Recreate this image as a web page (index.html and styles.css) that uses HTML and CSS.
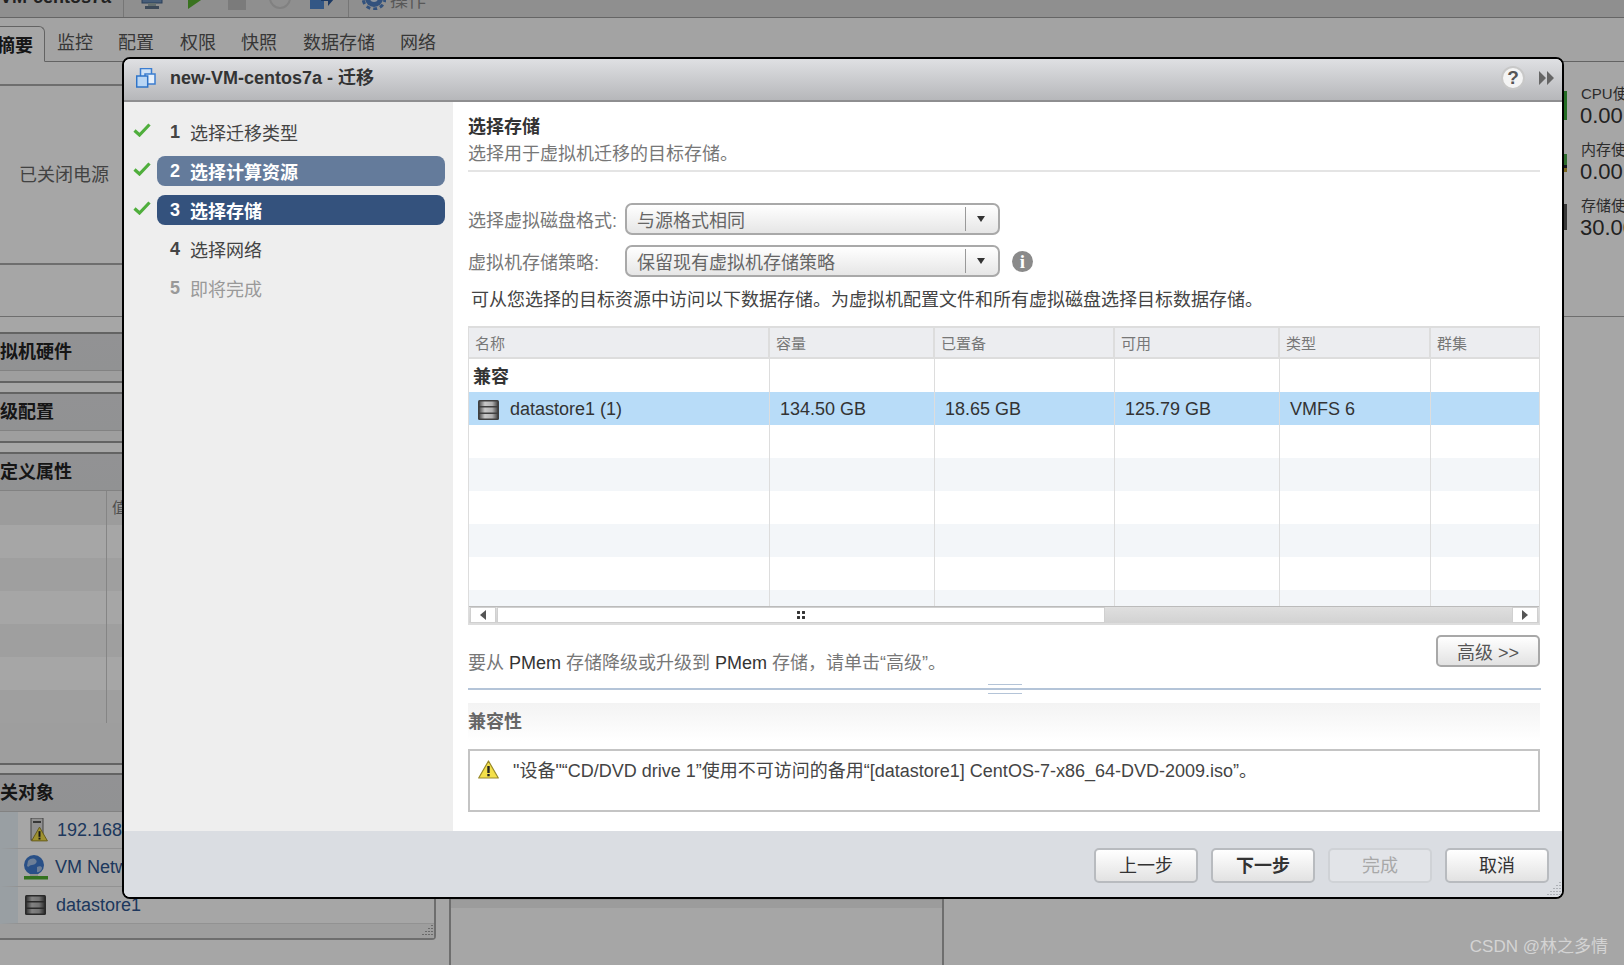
FILE: index.html
```html
<!DOCTYPE html>
<html lang="zh-CN">
<head>
<meta charset="utf-8">
<title>new-VM-centos7a - 迁移</title>
<link rel="stylesheet" href="styles.css">
</head>
<body>
<svg class="defs" width="0" height="0" aria-hidden="true">
  <defs>
    <linearGradient id="dsg" x1="0" x2="1" y1="0" y2="0"><stop offset="0" stop-color="#555"/><stop offset=".3" stop-color="#c8c8c8"/><stop offset=".7" stop-color="#b0b0b0"/><stop offset="1" stop-color="#4a4a4a"/></linearGradient>
    <symbol id="ds" viewBox="0 0 21 20"><rect width="21" height="20" rx="1.5" fill="#3f3f3f"/><rect x="1.500" y="1.500" width="18" height="4.500" fill="url(#dsg)"/><rect x="1.500" y="7.500" width="18" height="5" fill="url(#dsg)"/><rect x="1.500" y="14" width="18" height="4.500" fill="url(#dsg)"/></symbol>
    <symbol id="warn" viewBox="0 0 21 19"><path d="M10.500 1 20.300 18H.7Z" fill="#f4e04a" stroke="#9a8a2a" stroke-width="1.200" stroke-linejoin="round"/><rect x="9.300" y="6" width="2.400" height="7" fill="#222"/><rect x="9.300" y="14" width="2.400" height="2.300" fill="#222"/></symbol>
    <symbol id="check" viewBox="0 0 18 14"><path d="M1.500 7.500 6.500 12 16.500 1.500" fill="none" stroke="#4fae3c" stroke-width="3.200"/></symbol>
  </defs>
</svg>

<div class="page">
  <header class="toolbar">
    <span class="vm-name">VM-centos7a</span>
    <i class="sep"></i>
    <svg class="tool t-monitor" width="22" height="22" viewBox="0 0 22 22"><rect x="1" y="1" width="20" height="14" fill="#6d8fb8" stroke="#42618a"/><rect x="7" y="15" width="8" height="3" fill="#9aa"/><rect x="4" y="18" width="14" height="3" fill="#5c7088"/></svg>
    <svg class="tool t-play" width="18" height="24" viewBox="0 0 18 24"><path d="M1 1 17 12 1 23Z" fill="#58b030"/></svg>
    <svg class="tool t-stop" width="18" height="18" viewBox="0 0 18 18"><rect width="18" height="18" fill="#bdbdbd"/></svg>
    <svg class="tool t-ring" width="24" height="24" viewBox="0 0 24 24"><circle cx="12" cy="12" r="10" fill="none" stroke="#c6c6c6" stroke-width="2"/></svg>
    <svg class="tool t-move" width="26" height="20" viewBox="0 0 26 20"><rect x="1" y="1" width="14" height="18" fill="#4f86cc"/><path d="M12 7h7V2l6 7-6 7v-5h-7Z" fill="#2d5a9a"/></svg>
    <i class="sep sep-b"></i>
    <svg class="tool t-gear" width="24" height="24" viewBox="0 0 24 24"><circle cx="12" cy="12" r="9" fill="#4f7fc0"/><circle cx="12" cy="12" r="11" fill="none" stroke="#4f7fc0" stroke-width="3" stroke-dasharray="4 3"/><circle cx="12" cy="12" r="4" fill="#dbe6f4"/></svg>
    <span class="tool-label">操作</span>
  </header>

  <nav class="tabs">
    <span class="tab tab-on">摘要</span>
    <span class="tab t1">监控</span>
    <span class="tab t2">配置</span>
    <span class="tab t3">权限</span>
    <span class="tab t2">快照</span>
    <span class="tab t3">数据存储</span>
    <span class="tab t2">网络</span>
  </nav>

  <section class="summary">
    <div class="sum-left">
      <div class="sum-band"></div>
      <div class="sum-main"><span class="power">已关闭电源</span></div>
    </div>
    <div class="stats">
      <div class="stat"><i class="bar bar-cpu"></i><div class="st-col"><span class="st-l">CPU使用情况</span><span class="st-v">0.00</span></div></div>
      <div class="stat"><i class="bar bar-mem"></i><div class="st-col"><span class="st-l">内存使用情况</span><span class="st-v">0.00</span></div></div>
      <div class="stat"><i class="bar bar-sto"></i><div class="st-col"><span class="st-l">存储使用情况</span><span class="st-v">30.00</span></div></div>
    </div>
  </section>

  <div class="lower">
    <aside class="side">
      <div class="sec"><h3 class="sec-h">拟机硬件</h3><div class="sec-f"></div></div>
      <div class="sec"><h3 class="sec-h">级配置</h3><div class="sec-f"></div></div>
      <div class="sec sec-table">
        <h3 class="sec-h">定义属性</h3>
        <div class="attr attr-head"><span class="attr-a"></span><span class="attr-b">值</span></div>
        <div class="attr"><span class="attr-a"></span></div>
        <div class="attr alt"><span class="attr-a"></span></div>
        <div class="attr"><span class="attr-a"></span></div>
        <div class="attr alt"><span class="attr-a"></span></div>
        <div class="attr"><span class="attr-a"></span></div>
        <div class="attr alt"><span class="attr-a"></span></div>
        <div class="sec-f sec-f-tall"></div>
      </div>
      <div class="sec sec-last">
        <h3 class="sec-h">关对象</h3>
        <div class="rel"><svg class="rel-i" width="18" height="24" viewBox="0 0 18 24"><rect x="1" y="0" width="12" height="22" fill="#ddd" stroke="#666"/><rect x="3" y="3" width="8" height="2" fill="#555"/><use href="#warn" x="1" y="8" width="17" height="16"/></svg><a class="rel-t rel-t1">192.168.1.1</a></div>
        <div class="rel rel-2"><svg width="24" height="25" viewBox="0 0 24 25"><circle cx="10" cy="10" r="10" fill="#3f7bd0"/><path d="M4 6c3-3 6-3 8-1s-1 5-4 5-3 3-5 1ZM13 12c2-1 5-1 5 1s-3 5-5 4Z" fill="#a8c4e8"/><rect x="6" y="19" width="8" height="3" fill="#ddd"/><rect y="21" width="24" height="3.500" fill="#4fb030"/></svg><a class="rel-t rel-t2">VM Network</a></div>
        <div class="rel rel-3"><svg width="21" height="20"><use href="#ds"/></svg><a class="rel-t rel-t3">datastore1</a></div>
        <div class="sec-end"><svg class="grip" width="14" height="14" viewBox="0 0 14 14"><path d="M12 1v1M12 4v1M9 4v1M12 7v1M9 7v1M6 7v1M12 10v1M9 10v1M6 10v1M3 10v1" stroke="#555"/></svg></div>
      </div>
    </aside>
    <div class="mid"><div class="mid-head"></div></div>
  </div>
</div>

<div class="dim"></div>

<div class="modal">
  <header class="m-head">
    <svg class="m-icon" width="20" height="20" viewBox="0 0 20 20"><rect x="4.500" y=".5" width="11" height="11" fill="#cfe2f6" stroke="#3b7dd0" stroke-width="1.500"/><rect x="9" y="6" width="10" height="10" fill="#e6f0fb" stroke="#3b7dd0" stroke-width="1.500"/><rect x=".7" y="8" width="11" height="11" fill="#b9d6f4" stroke="#2f74c8" stroke-width="1.500"/></svg>
    <span class="m-title">new-VM-centos7a - 迁移</span>
    <span class="help">?</span>
    <svg class="ffwd" width="16" height="14" viewBox="0 0 16 14"><path d="M0 0 7 7 0 14ZM8 0 15 7 8 14Z" fill="#666"/></svg>
  </header>

  <div class="m-body">
    <ol class="steps">
      <li class="step"><svg class="chk" width="18" height="14"><use href="#check"/></svg><div class="pill"><b class="num">1</b><span>选择迁移类型</span></div></li>
      <li class="step"><svg class="chk" width="18" height="14"><use href="#check"/></svg><div class="pill pill-done"><b class="num">2</b><span>选择计算资源</span></div></li>
      <li class="step"><svg class="chk" width="18" height="14"><use href="#check"/></svg><div class="pill pill-now"><b class="num">3</b><span>选择存储</span></div></li>
      <li class="step"><span class="chk"></span><div class="pill"><b class="num">4</b><span>选择网络</span></div></li>
      <li class="step"><span class="chk"></span><div class="pill pill-off"><b class="num">5</b><span>即将完成</span></div></li>
    </ol>

    <main class="content">
      <h2 class="c-title">选择存储</h2>
      <p class="c-sub">选择用于虚拟机迁移的目标存储。</p>
      <hr class="c-rule">

      <div class="form-row">
        <label class="f-label">选择虚拟磁盘格式:</label>
        <div class="select"><span class="sel-v">与源格式相同</span><span class="sel-a"></span></div>
      </div>
      <div class="form-row form-row-2">
        <label class="f-label">虚拟机存储策略:</label>
        <div class="select"><span class="sel-v">保留现有虚拟机存储策略</span><span class="sel-a"></span></div>
        <span class="info">i</span>
      </div>

      <p class="lead">可从您选择的目标资源中访问以下数据存储。为虚拟机配置文件和所有虚拟磁盘选择目标数据存储。</p>

      <div class="grid">
        <div class="grid-view">
          <table class="tbl">
            <colgroup><col class="c1"><col class="c2"><col class="c3"><col class="c4"><col class="c5"><col></colgroup>
            <thead><tr><th>名称</th><th>容量</th><th>已置备</th><th>可用</th><th>类型</th><th>群集</th></tr></thead>
            <tbody>
              <tr class="grp"><td>兼容</td><td></td><td></td><td></td><td></td><td></td></tr>
              <tr class="sel"><td class="ds-cell"><span class="ds-name"><svg width="21" height="20"><use href="#ds"/></svg>datastore1 (1)</span></td><td>134.50 GB</td><td>18.65 GB</td><td>125.79 GB</td><td>VMFS 6</td><td></td></tr>
              <tr><td></td><td></td><td></td><td></td><td></td><td></td></tr>
              <tr class="alt"><td></td><td></td><td></td><td></td><td></td><td></td></tr>
              <tr><td></td><td></td><td></td><td></td><td></td><td></td></tr>
              <tr class="alt"><td></td><td></td><td></td><td></td><td></td><td></td></tr>
              <tr><td></td><td></td><td></td><td></td><td></td><td></td></tr>
              <tr class="alt"><td></td><td></td><td></td><td></td><td></td><td></td></tr>
            </tbody>
          </table>
        </div>
        <div class="hbar">
          <span class="hb-btn"><i class="arr-l"></i></span>
          <div class="hb-track"><div class="hb-thumb"><span class="hb-dots"></span></div></div>
          <span class="hb-btn"><i class="arr-r"></i></span>
        </div>
      </div>

      <div class="note-row">
        <p class="note">要从 <span class="latin">PMem</span> 存储降级或升级到 <span class="latin">PMem</span> 存储，请单击“高级”。</p>
        <button class="btn btn-adv">高级 &gt;&gt;</button>
      </div>

      <div class="splitter"><span class="split-h"></span></div>

      <h4 class="compat">兼容性</h4>
      <div class="msg"><svg width="21" height="19"><use href="#warn"/></svg><span class="msg-t">"设备"“CD/DVD drive 1”使用不可访问的备用“[datastore1] CentOS-7-x86_64-DVD-2009.iso”。</span></div>
    </main>
  </div>

  <footer class="m-foot">
    <button class="btn fbtn">上一步</button>
    <button class="btn fbtn fbtn-main">下一步</button>
    <button class="btn fbtn fbtn-off">完成</button>
    <button class="btn fbtn fbtn-cancel">取消</button>
    <svg class="grip m-grip" width="16" height="16" viewBox="0 0 16 16"><path d="M14 1v1M14 4v1M11 4v1M14 7v1M11 7v1M8 7v1M14 10v1M11 10v1M8 10v1M5 10v1M14 13v1M11 13v1M8 13v1M5 13v1M2 13v1" stroke="#80848a"/></svg>
  </footer>
</div>

<div class="mark">CSDN @林之多情</div>
</body>
</html>
```
FILE: styles.css
```css
* { box-sizing: border-box; }
html, body { margin: 0; height: 100%; overflow: hidden; }
body {
  font-family: "Liberation Sans", "Noto Sans CJK SC", sans-serif;
  font-size: 18px;
  color: #333;
  background: #fff;
  position: relative;
  width: 1624px;
  height: 965px;
}
h2, h3, h4, p, ol { margin: 0; padding: 0; }
.defs { position: absolute; }

/* page behind the dialog */
.page { display: flex; flex-direction: column; height: 965px; overflow: hidden; }
.toolbar {
  height: 18px; flex: none; display: flex; align-items: flex-end; overflow: hidden;
  background: #dcdcdc; border-bottom: 1px solid #9c9c9c; padding-bottom: 7px;
  white-space: nowrap;
}
.vm-name { font-weight: 700; font-size: 18px; line-height: 18px; width: 123px; margin-bottom: 4px; flex: none; }
.sep { width: 1px; height: 30px; background: #b5b5b5; flex: none; margin-bottom: -7px; }
.sep-b { margin-left: 13px; }
.tool { flex: none; }
.t-monitor { margin-left: 17px; }
.t-play { margin-left: 24px; }
.t-stop { margin-left: 23px; }
.t-ring { margin-left: 22px; }
.t-move { margin-left: 17px; }
.t-gear { margin-left: 13px; }
.tool-label { margin-left: 4px; font-size: 18px; line-height: 18px; color: #888; }

.tabs {
  height: 44px; flex: none; display: flex; align-items: flex-end;
  background: #fbfbfb; border-bottom: 1px solid #999; white-space: nowrap;
}
.tab { font-size: 18px; line-height: 26px; color: #555; padding-bottom: 5px; }
.tab-on {
  width: 45px; height: 36px; margin-bottom: -1px; padding: 6px 0 0; text-indent: -3px;
  background: #fff; border: 1px solid #999; border-left: 0; border-bottom-color: #fff;
  border-top-right-radius: 6px; font-weight: 700; color: #222; overflow: hidden;
}
.t1 { margin-left: 12px; }
.t2 { margin-left: 25px; }
.t3 { margin-left: 26px; }

.summary { height: 255px; flex: none; display: flex; border-bottom: 1px solid #aaa; }
.sum-left { width: 1000px; }
.sum-band { height: 24px; border-bottom: 2px solid #aaa; }
.sum-main { height: 179px; border-bottom: 2px solid #aaa; padding: 77px 0 0 19px; }
.power { color: #666; line-height: 24px; }
.stats { margin-left: auto; width: 60px; padding-top: 22px; white-space: nowrap; overflow: hidden; }
.stat { display: flex; align-items: flex-start; height: 56px; }
.bar { width: 3px; flex: none; margin-right: 14px; }
.bar-cpu { height: 29px; margin-top: 7px; background: #38a838; }
.bar-mem { height: 18px; margin-top: 14px; background: linear-gradient(#48a848 60%, #223 60%, #223 80%, #c0a030 80%); }
.bar-sto { height: 26px; margin-top: 8px; background: #555; }
.st-col { display: flex; flex-direction: column; }
.st-l { font-size: 15px; line-height: 20px; color: #444; }
.st-v { font-size: 22px; line-height: 24px; color: #333; margin-left: -1px; }

.lower { flex: 1; display: flex; min-height: 0; }
.side { width: 436px; flex: none; padding-top: 15px; }
.sec { border-top: 2px solid #999; margin-bottom: 9px; }
.sec-h {
  height: 37px; margin: 0; font-size: 18px; line-height: 37px; font-weight: 700; color: #222;
  background: linear-gradient(#e0e1e3, #dfe0e2); border-bottom: 1px solid #c8c8c8;
}
.sec-f { height: 12px; background: #f3f3f3; border-bottom: 2px solid #999; }
.sec-f-tall { height: 42px; }
.sec-table { margin-bottom: 8px; }
.attr { height: 33px; display: flex; background: #fff; }
.attr.alt { background: #f4f4f4; }
.attr-head { height: 34px; background: #f0f0f0; font-size: 15px; line-height: 34px; color: #777; }
.attr-a { width: 107px; border-right: 1px solid #ccc; flex: none; }
.attr-b { padding-left: 5px; }
.sec-last { border-top: 2px solid #999; border-right: 2px solid #aaa; border-bottom: 2px solid #aaa; border-bottom-right-radius: 4px; }
.rel { height: 37px; display: flex; align-items: center; background: #fff; border-left: 18px solid #ecf5fb; border-bottom: 1px solid #e0e0e0; padding-left: 12px; }
.rel-i { flex: none; }
.rel-t { color: #2e568f; font-size: 18px; white-space: nowrap; }
.rel-t1 { margin-left: 9px; }
.rel-2 { padding-left: 6px; height: 38px; }
.rel-t2 { margin-left: 7px; }
.rel-3 { padding-left: 7px; }
.rel-t3 { margin-left: 10px; }
.sec-end { height: 14px; background: #f3f3f3; display: flex; justify-content: flex-end; }

.mid { margin-left: 13px; width: 495px; flex: none; border-left: 2px solid #aaa; border-right: 2px solid #aaa; }
.mid-head { margin-top: 581px; height: 10px; background: #f0f0f0; border-top: 2px solid #ddd; }

.dim { position: absolute; inset: 0; background: rgba(0, 0, 0, .35); }

/* dialog */
.modal {
  position: absolute; left: 122px; top: 57px; width: 1442px; height: 842px;
  display: flex; flex-direction: column; background: #fff;
  border: 2px solid #000; border-radius: 8px; overflow: hidden;
}
.m-head {
  height: 43px; flex: none; display: flex; align-items: center; padding: 0 0 3px 12px;
  background: linear-gradient(#dfe0e3, #b6b7ba); border-bottom: 2px solid #8e8e90;
}
.m-title { font-weight: 700; margin: 0 0 1px 14px; color: #333; line-height: 24px; }
.help {
  margin-left: auto; width: 24px; height: 24px; border-radius: 50%;
  background: #f4f4f4; border: 2px solid #c8c8c8; color: #555;
  font-weight: 700; font-size: 19px; line-height: 20px; text-align: center;
}
.ffwd { margin: 0 7px 0 14px; }

.m-body { flex: 1; min-height: 0; display: flex; }
.steps { width: 329px; flex: none; background: #eee; list-style: none; padding: 15px 8px 0 9px; display: flex; flex-direction: column; gap: 9px; }
.step { height: 30px; display: flex; align-items: center; gap: 6px; }
.chk { width: 18px; height: 14px; flex: none; margin-top: -4px; }
.pill { flex: 1; height: 30px; border-radius: 8px; display: flex; align-items: center; padding-left: 13px; color: #444; }
.num { width: 20px; font-size: 18px; flex: none; }
.pill-done { background: #647b9b; color: #fff; font-weight: 700; }
.pill-now { background: #34527d; color: #fff; font-weight: 700; }
.pill-off { color: #999; }

.content { flex: 1; min-width: 0; padding: 14px 22px 0 15px; display: flex; flex-direction: column; }
.c-title { font-size: 18px; line-height: 24px; font-weight: 700; color: #333; margin-top: -1px; }
.c-sub { margin-top: 3px; line-height: 24px; color: #777; }
.c-rule { margin: 4px 0 0; border: 0; height: 2px; background: #e4e4e4; }

.form-row { display: flex; align-items: center; margin-top: 31px; height: 32px; }
.form-row-2 { margin-top: 10px; }
.f-label { width: 157px; flex: none; color: #777; }
.select {
  width: 375px; height: 32px; display: flex; align-items: center; flex: none;
  border: 2px solid #a9a9a9; border-radius: 7px; background: linear-gradient(#fff, #e6e6e6);
}
.sel-v { flex: 1; padding-left: 10px; color: #666; }
.sel-a { width: 33px; height: 24px; border-left: 1px solid #999; position: relative; }
.sel-a::after {
  content: ""; position: absolute; left: 11px; top: 9px;
  border-left: 4px solid transparent; border-right: 4px solid transparent; border-top: 6px solid #333;
}
.info {
  margin-left: 12px; width: 21px; height: 21px; border-radius: 50%; background: #8a8a8a; color: #fff;
  font-family: "Liberation Serif", serif; font-weight: 700; font-size: 19px; line-height: 21px; text-align: center;
}
.lead { margin: 11px 0 0 3px; line-height: 24px; color: #444; white-space: nowrap; }

.grid { margin-top: 14px; height: 299px; flex: none; border: 1px solid #ddd; border-top-width: 2px; border-bottom-width: 2px; }
.grid-view { height: 278px; overflow: hidden; }
.tbl { width: 100%; table-layout: fixed; border-collapse: separate; border-spacing: 0; }
.c1 { width: 301px; }
.c2 { width: 165px; }
.c3 { width: 180px; }
.c4 { width: 165px; }
.c5 { width: 151px; }
.tbl th {
  height: 31px; padding: 0 0 0 6px; text-align: left; font-size: 15px; font-weight: 400; color: #777;
  background: #ecedf0; border-right: 2px solid #ddd; border-bottom: 2px solid #ddd;
}
.tbl td { height: 33px; padding: 0 0 0 10px; border-right: 1px solid #ddd; white-space: nowrap; color: #333; }
.tbl th:last-child, .tbl td:last-child { border-right: 0; }
.tbl .alt td { background: #f3f6f9; }
.tbl .sel td { background: #b8dcf8; padding-top: 2px; }
.tbl .grp td { font-weight: 700; padding: 0 0 2px 4px; }
.tbl .sel .ds-cell { padding-left: 9px; }
.ds-name { display: flex; align-items: center; gap: 11px; }
.hbar { height: 17px; display: flex; border-top: 1px solid #bbb; background: linear-gradient(#dfdfdf, #d2d2d2); padding: 0 1px; }
.hb-btn { width: 26px; flex: none; background: #fff; border: 1px solid #d0d0d0; display: flex; align-items: center; justify-content: center; }
.arr-l { border-top: 5px solid transparent; border-bottom: 5px solid transparent; border-right: 6px solid #555; }
.arr-r { border-top: 5px solid transparent; border-bottom: 5px solid transparent; border-left: 6px solid #555; }
.hb-track { flex: 1; padding-left: 1px; }
.hb-thumb { width: 608px; height: 100%; background: #fff; border: 1px solid #d0d0d0; display: flex; align-items: center; justify-content: center; }
.hb-dots {
  width: 10px; height: 10px;
  background: radial-gradient(circle, #333 1.4px, transparent 1.6px) 0 0 / 5px 5px;
}

.note-row { margin-top: 10px; height: 41px; display: flex; justify-content: space-between; flex: none; }
.note { align-self: flex-end; line-height: 26px; color: #777; white-space: nowrap; }
.latin { color: #333; }
.btn {
  font: inherit; cursor: default; color: #333; border: 2px solid #b8bbbf; border-radius: 5px;
  background: linear-gradient(#fff, #e2e2e2); padding: 0;
}
.btn-adv { width: 104px; height: 32px; color: #555; border-color: #a8a8a8; }

.splitter { margin: 12px -1px 0 0; height: 2px; background: #b4c4d8; position: relative; flex: none; }
.split-h {
  position: absolute; left: 520px; top: -4px; width: 34px; height: 10px;
  border-top: 1px solid #b4c4d8; border-bottom: 1px solid #b4c4d8;
}
.compat {
  margin-top: 13px; height: 38px; line-height: 38px; font-size: 18px; font-weight: 700; color: #666; flex: none;
  background: linear-gradient(#f3f3f3, #fff);
}
.msg { margin-top: 8px; height: 63px; border: 2px solid #c4c4c4; padding: 9px 0 0 8px; display: flex; align-items: flex-start; gap: 14px; flex: none; }
.msg-t { color: #444; line-height: 22px; white-space: nowrap; }

.m-foot { height: 66px; flex: none; background: #dadde2; display: flex; justify-content: flex-end; gap: 13px; padding: 17px 13px 0 0; position: relative; }
.fbtn { width: 104px; height: 35px; padding-bottom: 4px; }
.fbtn-main { font-weight: 700; }
.fbtn-off { color: #a8a8a8; background: #e2e4e8; border-color: #cfd2d6; }
.m-grip { position: absolute; right: 0; bottom: 0; }

.mark { position: absolute; right: 16px; bottom: 7px; font-size: 17px; line-height: 22px; color: #d4d4d4; }
```
